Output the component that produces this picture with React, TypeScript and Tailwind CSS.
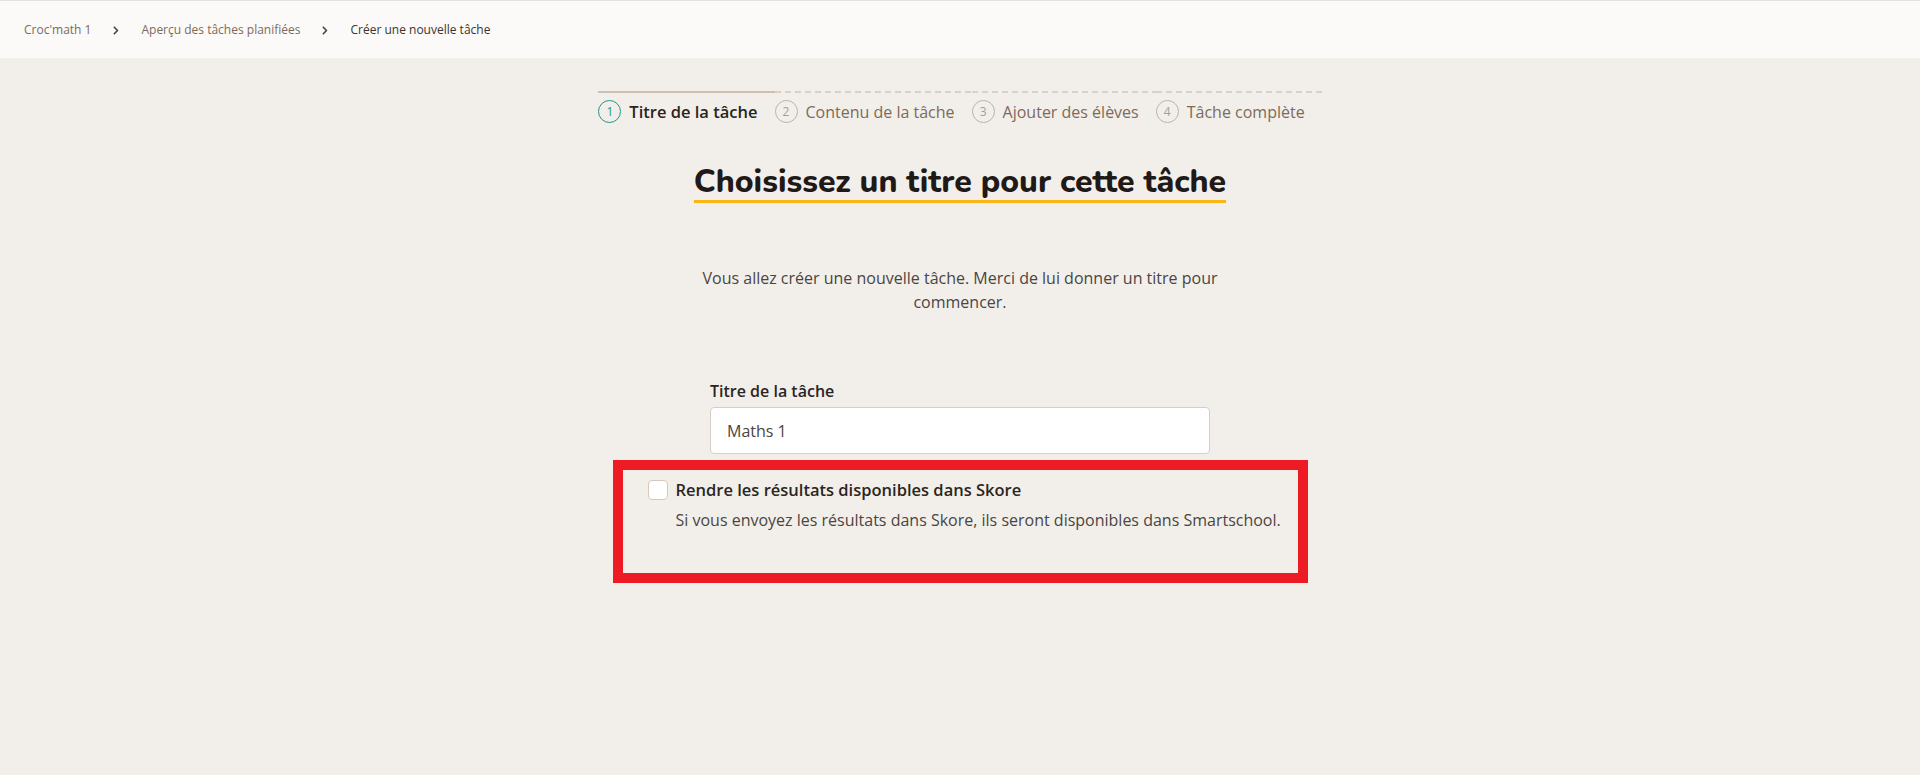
import React from "react";

const steps = [
  { n: 1, label: "Titre de la tâche" },
  { n: 2, label: "Contenu de la tâche" },
  { n: 3, label: "Ajouter des élèves" },
  { n: 4, label: "Tâche complète" },
];

function Chevron() {
  return (
    <svg width="6" height="9" viewBox="0 0 6 9" fill="none" className="shrink-0 mt-[1px]">
      <path d="M1.3 1.2 L4.5 4.5 L1.3 7.8" stroke="#4e4038" strokeWidth="1.6" strokeLinecap="round" strokeLinejoin="round" />
    </svg>
  );
}

function Breadcrumbs() {
  return (
    <nav className="h-[58px] border-t border-[#e4e2df] bg-[#fbfaf8] flex items-center px-6 gap-[22px] text-[12px] leading-4">
      <span className="text-[#7b6a5c]">Croc'math 1</span>
      <Chevron />
      <span className="text-[#7b6a5c]">Aperçu des tâches planifiées</span>
      <Chevron />
      <span className="text-[#3a332e]">Créer une nouvelle tâche</span>
    </nav>
  );
}

function Stepper() {
  return (
    <ol className="flex mt-[33px]">
      {steps.map((s) => {
        const active = s.n === 1;
        return (
          <li key={s.n} className="flex flex-col">
            {active ? (
              <div className="h-[2px] bg-[#cdbfb2]" />
            ) : (
              <div className="h-[2px] bg-[repeating-linear-gradient(90deg,#dccfc3_0px,#dccfc3_6px,transparent_6px,transparent_10px)]" />
            )}
            <div className="flex items-center gap-2 mt-[7px] pr-[17px] h-[23px]">
              {active ? (
                <span className="w-[23px] h-[23px] rounded-full border-[1.5px] border-[#1d968c] text-[#1d968c] text-[12px] flex items-center justify-center">
                  {s.n}
                </span>
              ) : (
                <span className="w-[23px] h-[23px] rounded-full border-[1.5px] border-[#b9b2ab] text-[#a49d96] text-[12px] flex items-center justify-center">
                  {s.n}
                </span>
              )}
              {active ? (
                <span className="text-[16.5px] leading-[22px] font-semibold text-[#2a2420]">{s.label}</span>
              ) : (
                <span className="text-[16px] leading-[22px] text-[#7d6a5b]">{s.label}</span>
              )}
            </div>
          </li>
        );
      })}
    </ol>
  );
}

export default function App() {
  return (
    <div className="min-h-screen bg-[#f2efea] font-['Open_Sans',sans-serif]">
      <Breadcrumbs />
      <main className="flex flex-col items-center">
        <Stepper />

        <h1 className="mt-[41px] inline-block border-b-[3px] border-[#fbb615] font-['Nunito','Lato',sans-serif] font-extrabold text-[32px] leading-[36px] text-[#1f1a17]">
          Choisissez un titre pour cette tâche
        </h1>

        <p className="mt-[63px] max-w-[530px] text-center text-[16px] leading-6 text-[#4a4542]">
          Vous allez créer une nouvelle tâche. Merci de lui donner un titre pour commencer.
        </p>

        <div className="mt-[65px] w-[500px] flex flex-col">
          <label className="text-[16px] leading-6 font-semibold text-[#2b2522]">Titre de la tâche</label>
          <input
            defaultValue="Maths 1"
            className="mt-1 h-[47px] bg-white border border-[#d9cec4] rounded-[4px] px-4 text-[16px] text-[#4a4542] outline-none"
          />
        </div>

        <div className="mt-[6px] w-[695px] border-[10px] border-[#ed1c24] pt-[8px] pl-[25px] pb-[41px]">
          <div className="flex items-center gap-2">
            <span className="w-5 h-5 rounded-[4px] border border-[#d6c9bc] bg-white shrink-0" />
            <span className="text-[16.5px] leading-6 font-semibold text-[#2b2522]">
              Rendre les résultats disponibles dans Skore
            </span>
          </div>
          <p className="mt-[6px] pl-7 text-[16px] leading-6 text-[#4a4542]">
            Si vous envoyez les résultats dans Skore, ils seront disponibles dans Smartschool.
          </p>
        </div>
      </main>
    </div>
  );
}
